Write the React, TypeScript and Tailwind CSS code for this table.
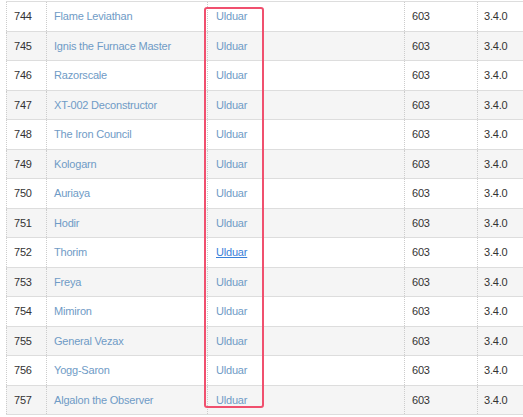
const rows: [number, string][] = [
  [744, 'Flame Leviathan'],
  [745, 'Ignis the Furnace Master'],
  [746, 'Razorscale'],
  [747, 'XT-002 Deconstructor'],
  [748, 'The Iron Council'],
  [749, 'Kologarn'],
  [750, 'Auriaya'],
  [751, 'Hodir'],
  [752, 'Thorim'],
  [753, 'Freya'],
  [754, 'Mimiron'],
  [755, 'General Vezax'],
  [756, 'Yogg-Saron'],
  [757, 'Algalon the Observer'],
];

export default function App() {
  return (
    <div
      className="relative w-[523px] h-[417px] overflow-hidden bg-white text-[11px] tracking-[-0.2px] text-[#333]"
      style={{ fontFamily: '"Liberation Sans", Arial, sans-serif' }}
    >
      <div className="ml-[6px] mt-[1px] w-[600px] border-t border-[#ddd]">
        {rows.map(([id, name], i) => (
          <div
            key={id}
            className={`flex h-[29.5px] items-center border-b border-[#ddd] ${i % 2 === 1 ? 'bg-[#f5f5f5]' : 'bg-white'}`}
          >
            <div className="flex h-full w-[40px] items-center border-l border-dotted border-[#ccc] pl-[7px]">{id}</div>
            <div className="flex h-full w-[161px] items-center border-l border-dotted border-[#ccc] pl-[7px] text-[#6f9bc6]">
              {name}
            </div>
            <div className="flex h-full w-[197px] items-center border-l border-dotted border-[#ccc] pl-[8px]">
              <span className={id === 752 ? 'text-[#3a80d9] underline' : 'text-[#6f9bc6]'}>Ulduar</span>
            </div>
            <div className="flex h-full w-[73px] items-center border-l border-dotted border-[#ccc] pl-[7px]">603</div>
            <div className="flex h-full w-[100px] items-center border-l border-dotted border-[#ccc] pl-[6px]">3.4.0</div>
          </div>
        ))}
      </div>
      <div className="absolute left-[204px] top-[7px] h-[401px] w-[60px] rounded-[3px] border-2 border-[#f0506e]" />
    </div>
  );
}
